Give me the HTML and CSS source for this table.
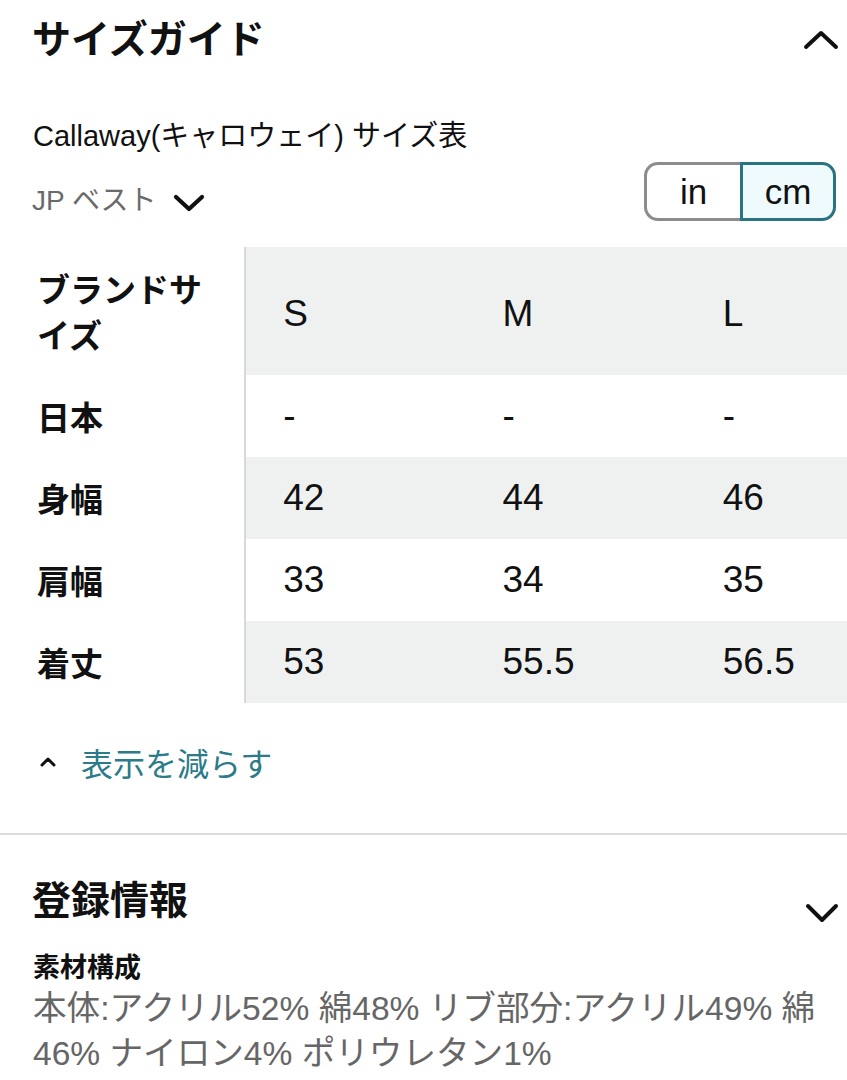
FILE: index.html
```html
<!DOCTYPE html>
<html lang="ja">
<head>
<meta charset="utf-8">
<link rel="stylesheet" href="styles.css">
</head>
<body>
<section class="guide">
  <header class="sec-head">
    <h2 class="sec-title">サイズガイド</h2>
    <svg class="chev chev-up" width="36" height="20" viewBox="0 0 36 20"><polyline points="3,17 18,3 33,17" fill="none" stroke="#111" stroke-width="4" stroke-linecap="round" stroke-linejoin="round"/></svg>
  </header>
  <p class="brand">Callaway(キャロウェイ) サイズ表</p>
  <div class="controls">
    <div class="region">JP ベスト
      <svg class="chev-sm" width="32" height="18" viewBox="0 0 32 18"><polyline points="3,3 16,15 29,3" fill="none" stroke="#111" stroke-width="4.2" stroke-linecap="round" stroke-linejoin="round"/></svg>
    </div>
    <div class="unit-toggle">
      <span class="seg">in</span>
      <span class="seg active">cm</span>
    </div>
  </div>
  <div class="table-wrap">
    <table class="size-table">
      <tr class="row-head shade">
        <th class="label">ブランドサイズ</th>
        <td>S</td><td>M</td><td>L</td>
      </tr>
      <tr>
        <th class="label">日本</th>
        <td>-</td><td>-</td><td>-</td>
      </tr>
      <tr class="shade">
        <th class="label">身幅</th>
        <td>42</td><td>44</td><td>46</td>
      </tr>
      <tr>
        <th class="label">肩幅</th>
        <td>33</td><td>34</td><td>35</td>
      </tr>
      <tr class="shade">
        <th class="label">着丈</th>
        <td>53</td><td>55.5</td><td>56.5</td>
      </tr>
    </table>
  </div>
  <div class="less">
    <svg class="caret" width="18" height="12" viewBox="0 0 18 12"><polyline points="3,9 9,3 15,9" fill="none" stroke="#111" stroke-width="3" stroke-linecap="round" stroke-linejoin="round"/></svg>
    <span class="less-text">表示を減らす</span>
  </div>
</section>
<hr class="divider">
<section class="info">
  <header class="sec-head info-head">
    <h2 class="sec-title">登録情報</h2>
    <svg class="chev chev-down" width="34" height="20" viewBox="0 0 34 20"><polyline points="3,3 17,17 31,3" fill="none" stroke="#111" stroke-width="4" stroke-linecap="round" stroke-linejoin="round"/></svg>
  </header>
  <h3 class="sub">素材構成</h3>
  <p class="material">本体:アクリル52% 綿48% リブ部分:アクリル49% 綿46% ナイロン4% ポリウレタン1%</p>
</section>
</body>
</html>
```

FILE: styles.css
```css
html, body {
  margin: 0;
  padding: 0;
  background: #fff;
}
body {
  width: 847px;
  overflow: hidden;
  font-family: "Liberation Sans", "Noto Sans CJK JP", sans-serif;
  color: #111;
}
.guide {
  padding-top: 11px;
}
.sec-head {
  display: flex;
  justify-content: space-between;
  align-items: center;
  padding: 0 8px 0 32px;
  height: 50px;
}
.sec-title {
  margin: 0;
  font-family: "Noto Sans CJK JP", sans-serif;
  font-size: 39px;
  font-weight: 700;
  line-height: 50px;
}
.chev-up {
  margin-top: 7px;
}
.brand {
  margin: 55px 0 0 33px;
  font-size: 29px;
  line-height: 40px;
}
.controls {
  display: flex;
  justify-content: space-between;
  align-items: flex-end;
  padding: 0 11px 0 32px;
  margin-top: 6px;
}
.region {
  display: flex;
  align-items: center;
  gap: 16px;
  font-size: 28px;
  line-height: 40px;
  color: #6a6a6a;
  margin-bottom: 0;
}
.chev-sm {
  margin-top: 4px;
}
.unit-toggle {
  display: flex;
  height: 59px;
}
.seg {
  display: flex;
  align-items: center;
  justify-content: center;
  width: 96px;
  box-sizing: border-box;
  font-size: 35px;
  border: 3px solid #8c8c8c;
  color: #111;
}
.seg:first-child {
  border-right: none;
  border-radius: 14px 0 0 14px;
}
.seg.active {
  border-color: #2a7383;
  background: #eefafb;
  border-radius: 0 14px 14px 0;
}
.table-wrap {
  margin-top: 26px;
  overflow: hidden;
}
.size-table {
  border-collapse: collapse;
  table-layout: fixed;
  width: 906px;
}
.size-table th,
.size-table td {
  padding: 0;
  height: 82px;
  vertical-align: middle;
  text-align: left;
}
.size-table .row-head th,
.size-table .row-head td {
  height: 128px;
}
.size-table .row-head td {
  padding-top: 6px;
}
.size-table th.label {
  width: 245px;
  box-sizing: border-box;
  padding: 0 36px 0 37px;
  background: #fff;
  border-right: 2px solid #d9d9d9;
  font-family: "Noto Sans CJK JP", sans-serif;
  font-size: 33px;
  font-weight: 700;
  line-height: 46px;
}
.size-table td {
  width: 220px;
  padding-left: 37px;
  box-sizing: border-box;
  font-size: 37px;
  line-height: 46px;
  color: #111;
}
.size-table tr.shade td {
  background: #eff1f1;
}
.less {
  display: flex;
  align-items: center;
  gap: 24px;
  margin: 39px 0 0 39px;
  height: 40px;
}
.less-text {
  font-family: "Noto Sans CJK JP", sans-serif;
  font-size: 32px;
  line-height: 40px;
  color: #2b7b88;
}
.divider {
  margin: 51px 0 0;
  border: none;
  height: 2px;
  background: #dcdcdc;
}
.info {
  padding-top: 37px;
}
.info-head {
  align-items: flex-start;
}
.chev-down {
  margin-top: 31px;
}
.sub {
  margin: 24px 0 0 33px;
  font-family: "Noto Sans CJK JP", sans-serif;
  font-size: 27px;
  font-weight: 700;
  line-height: 40px;
}
.material {
  margin: 0 0 0 33px;
  font-size: 33.6px;
  line-height: 45px;
  color: #666;
}
```
